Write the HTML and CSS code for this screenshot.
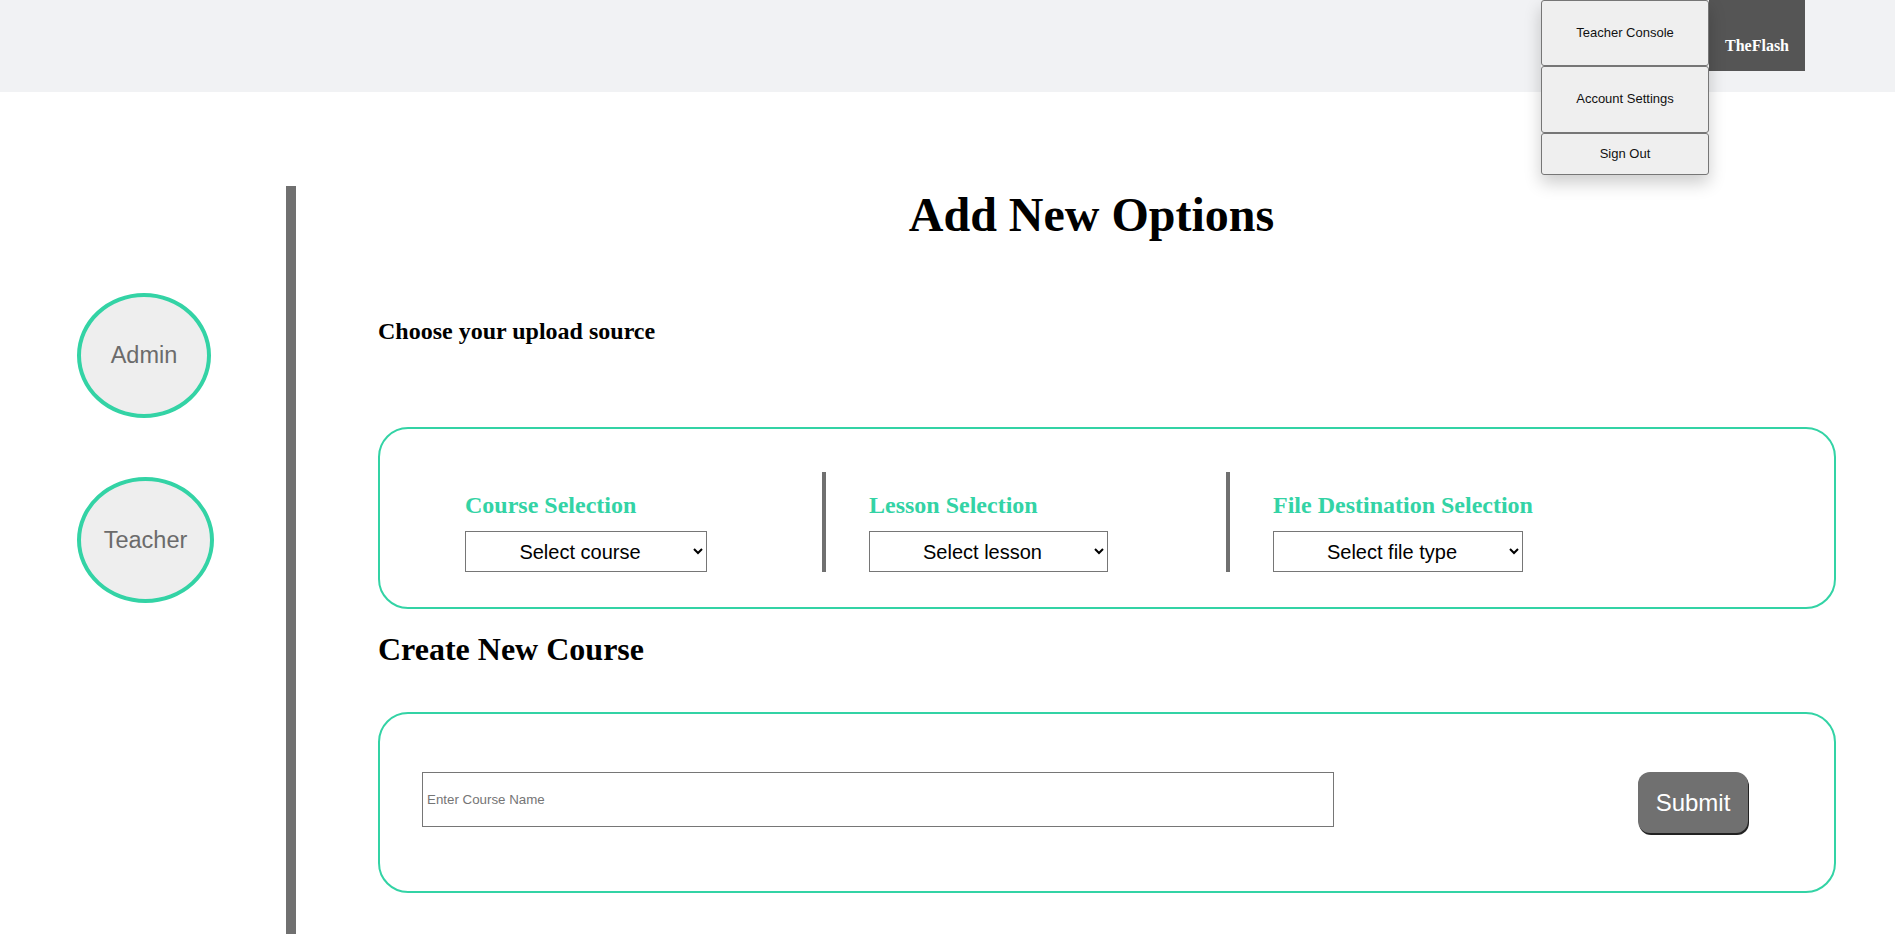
FILE: index.html
```html
<!DOCTYPE html>
<html lang="en">
<head>
<meta charset="utf-8">
<title>Add New Options</title>
<link rel="stylesheet" href="styles.css">
</head>
<body>
<header class="topbar">
  <div class="user">
    <div class="user-menu">
      <button class="menu-item menu-tall">Teacher Console</button>
      <button class="menu-item menu-tall menu-tall2">Account Settings</button>
      <button class="menu-item menu-short">Sign Out</button>
    </div>
    <div class="user-name">TheFlash</div>
  </div>
</header>
<div class="layout">
  <aside class="sidebar">
    <button class="role role-admin">Admin</button>
    <button class="role role-teacher">Teacher</button>
  </aside>
  <main class="main">
    <h1 class="page-title">Add New Options</h1>
    <div class="content">
      <h2 class="section-title">Choose your upload source</h2>
      <div class="panel panel-select">
        <div class="col col-first">
          <h3 class="col-title">Course Selection</h3>
          <select class="sel sel-course"><option>Select course</option></select>
        </div>
        <div class="col col-div">
          <h3 class="col-title">Lesson Selection</h3>
          <select class="sel sel-lesson"><option>Select lesson</option></select>
        </div>
        <div class="col col-div">
          <h3 class="col-title">File Destination Selection</h3>
          <select class="sel sel-file"><option>Select file type</option></select>
        </div>
      </div>
      <h1 class="create-title">Create New Course</h1>
      <div class="panel panel-create">
        <input class="course-input" type="text" placeholder="Enter Course Name">
        <button class="submit-btn">Submit</button>
      </div>
    </div>
  </main>
</div>
</body>
</html>
```
FILE: styles.css
```css
html, body {
  margin: 0;
  padding: 0;
  background: #ffffff;
}
body {
  font-family: "Liberation Serif", "Times New Roman", serif;
  color: #000;
  overflow: hidden;
}

/* Top bar */
.topbar {
  height: 92px;
  background: #f1f2f4;
  display: flex;
  justify-content: flex-end;
  padding-right: 90px;
  position: relative;
  z-index: 5;
}
.user {
  position: relative;
  height: 71px;
}
.user-name {
  box-sizing: border-box;
  width: 96px;
  height: 71px;
  background: #555555;
  color: #ffffff;
  font-family: "Liberation Serif", "Times New Roman", serif;
  font-size: 16px;
  font-weight: bold;
  line-height: 18px;
  padding-top: 37px;
  text-align: center;
}
.user-menu {
  position: absolute;
  top: 0;
  right: 100%;
  width: 168px;
  display: flex;
  flex-direction: column;
  box-shadow: 0 8px 16px 0 rgba(0, 0, 0, 0.2);
  background: #efefef;
}
.menu-item {
  display: block;
  box-sizing: border-box;
  width: 168px;
  margin: 0;
  padding: 0 0 2px;
  background: #efefef;
  border: 1px solid #767676;
  border-radius: 3px;
  font-family: "Liberation Sans", Arial, sans-serif;
  font-size: 13px;
  color: #111;
  text-align: center;
}
.menu-tall { height: 66px; }
.menu-tall2 { height: 67px; }
.menu-short { height: 42px; }

/* Layout */
.layout {
  display: flex;
  min-height: calc(100vh - 92px);
}
.sidebar {
  width: 286px;
  flex: none;
  display: flex;
  flex-direction: column;
  align-items: flex-start;
  padding-top: 201px;
  padding-left: 77px;
  box-sizing: border-box;
  gap: 59px;
}
.role {
  box-sizing: border-box;
  height: 126px;
  border: 4px solid #33d3a5;
  border-radius: 50%;
  background: #eeeeee;
  color: #6b6b6b;
  font-family: "Liberation Sans", Arial, sans-serif;
  font-size: 23.5px;
  padding: 0;
  margin: 0;
}
.role-admin { width: 134px; height: 125px; }
.role-teacher { width: 137px; }

.main {
  flex: 1;
  margin-top: 94px;
  border-left: 10px solid #707070;
}
.page-title {
  margin: 2px 8px 0 0;
  font-size: 48px;
  line-height: 54px;
  font-weight: bold;
  text-align: center;
}
.content {
  padding-left: 82px;
  padding-right: 59px;
}
.section-title {
  margin: 76px 0 0;
  font-size: 24px;
  line-height: 27px;
  font-weight: bold;
}

.panel {
  border: 2px solid #33d3a5;
  border-radius: 30px;
  display: flex;
}
.panel-select {
  margin-top: 82px;
  padding: 43px 0 35px 85px;
}
.col {
  box-sizing: border-box;
  height: 100px;
  display: flex;
  flex-direction: column;
  justify-content: flex-end;
  align-items: flex-start;
}
.col-first { width: 357px; }
.col-div {
  width: 404px;
  border-left: 4px solid #707070;
  padding-left: 43px;
}
.col-title {
  margin: 0 0 13px;
  font-size: 24px;
  line-height: 26px;
  font-weight: bold;
  color: #33d3a5;
}
.sel {
  box-sizing: border-box;
  height: 41px;
  border: 1px solid #767676;
  border-radius: 0;
  background: #ffffff;
  font-family: "Liberation Sans", Arial, sans-serif;
  font-size: 20px;
  color: #000;
  text-align: center;
  text-align-last: center;
}
.sel-course { width: 242px; }
.sel-lesson { width: 239px; }
.sel-file { width: 250px; }

.create-title {
  margin: 22px 0 0;
  font-size: 32px;
  line-height: 36px;
  font-weight: bold;
}
.panel-create {
  margin-top: 45px;
  padding: 58px 86px 58px 42px;
  align-items: flex-start;
}
.course-input {
  box-sizing: border-box;
  width: 912px;
  height: 55px;
  margin: 0;
  border: 1px solid #767676;
  padding: 1px 4px;
  font-family: "Liberation Sans", Arial, sans-serif;
  font-size: 13.33px;
}
.course-input::placeholder {
  color: #757575;
}
.submit-btn {
  margin-left: auto;
  box-sizing: border-box;
  width: 110px;
  height: 61px;
  padding: 0;
  border: none;
  border-radius: 12px;
  background: #707070;
  color: #ffffff;
  font-family: "Liberation Sans", Arial, sans-serif;
  font-size: 24px;
  box-shadow: 1px 2px 0 #222222;
}
```
